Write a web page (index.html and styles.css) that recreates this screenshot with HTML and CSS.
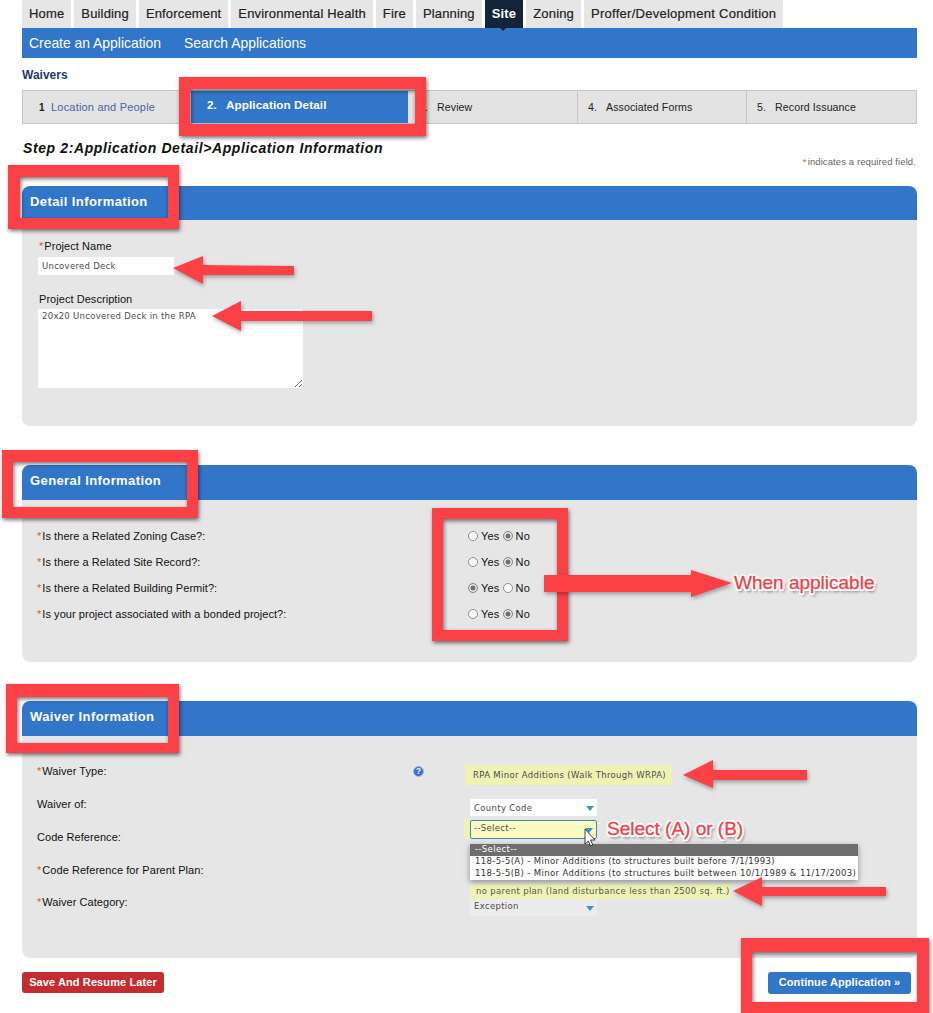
FILE: index.html
```html
<!DOCTYPE html>
<html lang="en">
<head>
<meta charset="utf-8">
<title>Waivers - Application Detail</title>
<link rel="stylesheet" href="styles.css">
</head>
<body>
<div class="page">
  <nav class="tabs">
    <a class="tab">Home</a><a class="tab">Building</a><a class="tab">Enforcement</a><a class="tab">Environmental Health</a><a class="tab">Fire</a><a class="tab">Planning</a><a class="tab tab-active">Site</a><a class="tab">Zoning</a><a class="tab">Proffer/Development Condition</a>
  </nav>
  <div class="subnav"><a>Create an Application</a><a>Search Applications</a></div>
  <div class="module">Waivers</div>
  <ol class="steps">
    <li class="step step-done"><span class="num num-first">1</span><span>Location and People</span></li>
    <li class="step step-current"><span class="num">2.</span><span>Application Detail</span></li>
    <li class="step step-third"><span class="num">3.</span><span>Review</span></li>
    <li class="step"><span class="num">4.</span><span>Associated Forms</span></li>
    <li class="step step-last"><span class="num">5.</span><span>Record Issuance</span></li>
  </ol>
  <h1 class="heading">Step 2:Application Detail&gt;Application Information</h1>
  <p class="required-note"><span class="star">*</span>indicates a required field.</p>

  <section class="panel panel-detail">
    <h2 class="panel-head">Detail Information</h2>
    <div class="panel-body detail-body">
      <label class="field-label"><span class="star">*</span>Project Name</label>
      <input class="text-input" type="text" value="Uncovered Deck">
      <label class="field-label label-desc">Project Description</label>
      <textarea class="text-area">20x20 Uncovered Deck in the RPA</textarea>
    </div>
  </section>

  <section class="panel panel-general">
    <h2 class="panel-head">General Information</h2>
    <div class="panel-body general-body">
      <div class="q-row"><span class="q"><span class="star">*</span>Is there a Related Zoning Case?:</span><span class="opts"><input class="radio" type="radio" name="a"><span>Yes</span><input class="radio" type="radio" name="a" checked><span>No</span></span></div>
      <div class="q-row"><span class="q"><span class="star">*</span>Is there a Related Site Record?:</span><span class="opts"><input class="radio" type="radio" name="b"><span>Yes</span><input class="radio" type="radio" name="b" checked><span>No</span></span></div>
      <div class="q-row"><span class="q"><span class="star">*</span>Is there a Related Building Permit?:</span><span class="opts"><input class="radio" type="radio" name="c" checked><span>Yes</span><input class="radio" type="radio" name="c"><span>No</span></span></div>
      <div class="q-row"><span class="q"><span class="star">*</span>Is your project associated with a bonded project?:</span><span class="opts"><input class="radio" type="radio" name="d"><span>Yes</span><input class="radio" type="radio" name="d" checked><span>No</span></span></div>
    </div>
  </section>

  <section class="panel panel-waiver">
    <h2 class="panel-head">Waiver Information</h2>
    <div class="panel-body waiver-body">
      <div class="w-labels">
        <div class="w-label w-label-help"><span><span class="star">*</span>Waiver Type:</span>
          <svg class="help" viewBox="0 0 12 12" width="11" height="11" aria-hidden="true"><circle cx="6" cy="6" r="5.4" fill="#3f6fc4" stroke="#9db6e2" stroke-width="1"/><text x="6" y="9" text-anchor="middle" class="help-q">?</text></svg>
        </div>
        <div class="w-label">Waiver of:</div>
        <div class="w-label">Code Reference:</div>
        <div class="w-label"><span class="star">*</span>Code Reference for Parent Plan:</div>
        <div class="w-label"><span class="star">*</span>Waiver Category:</div>
      </div>
      <div class="w-fields">
        <div class="hl hl-type">RPA Minor Additions (Walk Through WRPA)</div>
        <div class="sel sel-white">County Code<i class="caret"></i></div>
        <div class="sel-wrap">
          <div class="sel sel-focus">--Select--<i class="caret"></i></div>
          <ul class="menu">
            <li class="menu-on">--Select--</li>
            <li>118-5-5(A) - Minor Additions (to structures built before 7/1/1993)</li>
            <li>118-5-5(B) - Minor Additions (to structures built between 10/1/1989 &amp; 11/17/2003)</li>
          </ul>
        </div>
        <div class="hl hl-plan">no parent plan (land disturbance less than 2500 sq. ft.)</div>
        <div class="sel sel-grey">Exception<i class="caret"></i></div>
      </div>
    </div>
  </section>

  <div class="actions">
    <button class="btn btn-save" type="button">Save And Resume Later</button>
    <button class="btn btn-go" type="button">Continue Application »</button>
  </div>

  <!-- Red annotations drawn over the screenshot -->
  <div class="frame frame-step"></div>
  <div class="frame frame-detail"></div>
  <div class="frame frame-general"></div>
  <div class="frame frame-radios"></div>
  <div class="frame frame-waiver"></div>
  <div class="frame frame-continue"></div>
  <svg class="arrows" viewBox="0 0 933 1013" width="933" height="1013" aria-hidden="true">
    <polygon points="173,268 203,256 203,265 294,266 294,275 203,275 203,284"/>
    <polygon points="212,316 241,301 241,311 372,311 372,321 241,321 241,331"/>
    <polygon points="544,575 691,575 691,570 732,583 691,597 691,592 544,592"/>
    <polygon points="683,775 713,760 713,770 807,770 807,780 713,780 713,788"/>
    <polygon points="733,891 762,877 762,887 886,887 886,896 762,896 762,906"/>
    <path class="cursor" d="M585 829v15l3.400-3 2.200 5 2.200-1-2.200-5h4.500z"/>
  </svg>
  <span class="callout callout-when">When applicable</span>
  <span class="callout callout-select">Select (A) or (B)</span>
</div>
</body>
</html>
```
FILE: styles.css
```css
* { box-sizing: border-box; }
html, body { margin: 0; padding: 0; background: #fff; }
body { font-family: "Liberation Sans", Arial, sans-serif; color: #111; }
.page { position: relative; width: 933px; height: 1013px; overflow: hidden; padding: 0 16px 0 22px; }

.tabs { display: flex; height: 28px; gap: 3px; }
.tab { background: #e6e6e6; color: #222; font-size: 13px; line-height: 27px; padding: 0 7px; letter-spacing: .16px; -webkit-text-stroke: .2px #222; white-space: nowrap; }
.tab:last-child { letter-spacing: .27px; }
.tab-active { background: #12233a; color: #fff; font-weight: 700; -webkit-text-stroke: 0; position: relative; }
.tab-active::after { content: ""; position: absolute; left: 15px; top: 28px; border: 3px solid transparent; border-top-color: #12233a; }

.subnav { display: flex; gap: 23px; height: 30px; background: #3276c9; padding-left: 7px; color: #fff; font-size: 13.900px; line-height: 30px; }

.module { margin-top: 10px; height: 16px; line-height: 15px; font-size: 12px; font-weight: 700; color: #1f3b60; }

.steps { list-style: none; margin: 6px 0 0; padding: 0; display: flex; height: 34px; background: #e3e3e3; border: 1px solid #c6c6c6; font-size: 10.600px; letter-spacing: .1px; }
.step { display: flex; align-items: center; width: 169px; padding-left: 10px; color: #222; border-right: 1px solid #c6c6c6; }
.num { width: 18px; flex: none; }
.step-done { width: 168px; padding-left: 16px; color: #46659f; border-right: 0; font-size: 11px; letter-spacing: .2px; }
.num-first { width: 12px; color: #222; font-weight: 700; font-size: 10px; }
.step-current { width: 217px; padding: 0 0 5px 16px; background: #3276c9; color: #fff; font-weight: 700; font-size: 11.700px; border-right: 0; }
.step-current .num { width: 19px; }
.step-third { width: 170px; padding-left: 11px; }
.step-last { width: auto; flex: 1; border-right: 0; }

.heading { margin: 16px 0 0 1px; height: 18px; font-size: 14px; line-height: 17px; font-weight: 700; font-style: italic; color: #111; letter-spacing: .61px; }
.required-note { margin: -2px 1px 0 0; height: 12px; line-height: 12px; text-align: right; font-size: 9.500px; color: #666; letter-spacing: .1px; }
.star { color: #c8642a; margin-right: 1px; }

.panel-head { margin: 0; height: 34px; background: #3276c9; border-radius: 8px 8px 0 0; padding-left: 8px; color: #fff; font-size: 13px; line-height: 32px; font-weight: 700; letter-spacing: .4px; }
.panel-body { background: #e6e6e6; border-radius: 0 0 8px 8px; font-size: 11px; letter-spacing: .05px; color: #111; }
.panel-detail { margin-top: 18px; }
.panel-general { margin-top: 39px; }
.panel-waiver { margin-top: 39px; }
.panel-general .panel-head, .panel-waiver .panel-head { height: 35px; }

.detail-body { height: 206px; padding: 20px 0 0 16px; }
.field-label { display: block; height: 13px; line-height: 13px; margin-left: 1px; }
.label-desc { margin-top: 18px; }
.text-input, .text-area { display: block; border: 0; background: #fff; padding: 0 4px; margin: 0; color: #4c4c4c; font-family: "DejaVu Sans", sans-serif; font-size: 8.500px; letter-spacing: .28px; outline: 0; border-radius: 1px; }
.text-input { width: 136px; height: 18px; margin-top: 4px; }
.text-area { width: 265px; height: 79px; margin-top: 3px; padding-top: 2px; }

.general-body { height: 162px; padding: 23px 0 0 15px; }
.q-row { display: grid; grid-template-columns: 431px auto; height: 26px; line-height: 26px; align-items: center; }
.q { white-space: nowrap; }
.opts { display: flex; align-items: center; gap: 3px; letter-spacing: .2px; }
.radio { appearance: none; -webkit-appearance: none; width: 10px; height: 10px; margin: 0; border: 1px solid #8c8c8c; border-radius: 50%; background: #fff; }
.radio:checked { background: #707070; box-shadow: inset 0 0 0 1.500px #eee; }

.waiver-body { height: 222px; padding: 28px 0 0 15px; display: grid; grid-template-columns: 428px 1fr; }
.w-labels { display: flex; flex-direction: column; }
.w-label { height: 33px; line-height: 14px; white-space: nowrap; }
.w-label-help { display: flex; justify-content: space-between; padding-right: 41px; }
.w-label:nth-child(5) { margin-top: -1px; }
.help { margin-top: 2px; }
.help-q { font-size: 9px; font-weight: 700; fill: #fff; letter-spacing: 0; }

.w-fields { font-family: "DejaVu Sans", sans-serif; font-size: 8.500px; letter-spacing: .33px; color: #4c4c4c; }
.hl { background: #eef3b4; white-space: nowrap; }
.hl-type { width: 207px; height: 20px; line-height: 21px; margin: 1px 0 0 0; padding-left: 8px; }
.hl-plan { width: 260px; height: 15px; line-height: 15px; margin: 21px 0 0 5px; padding-left: 6px; color: #555; }
.sel { position: relative; width: 127px; height: 17px; margin-left: 5px; padding-left: 4px; line-height: 19px; }
.sel-white { background: #fff; margin-top: 14px; }
.sel-wrap { position: relative; margin-top: 4px; height: 43px; }
.sel-focus { height: 19px; line-height: 15px; background: #fafac2; border: 1px solid #3f8aa5; border-radius: 2px; padding-left: 3px; box-shadow: -6px 0 0 #eef3b4; }
.sel-grey { background: #ececec; line-height: 15px; }
.caret { position: absolute; right: 3px; top: 7px; border: 4px solid transparent; border-top: 5px solid #3d94cc; border-bottom: 0; }
.menu { position: absolute; left: 5px; top: 24px; width: 388px; margin: 0; padding: 0; list-style: none; background: #fff; box-shadow: 0 2px 6px rgba(0,0,0,.4); z-index: 2; line-height: 11px; color: #333; white-space: nowrap; letter-spacing: .36px; }
.menu li { padding-left: 5px; height: 12px; }
.menu .menu-on { background: #6e6e6e; color: #fff; }

.actions { display: flex; justify-content: space-between; padding-right: 6px; margin-top: 14px; }
.btn { border: 0; height: 21px; padding: 0 0 2px; border-radius: 3px; color: #fff; font-family: "Liberation Sans", Arial, sans-serif; font-size: 11px; font-weight: 700; letter-spacing: .1px; }
.btn-save { width: 142px; background: #c42d2f; }
.btn-go { width: 143px; height: 22px; background: #3276c9; }

.frame { position: absolute; border: 12px solid #fb4046; box-shadow: 1px 2px 4px rgba(0,0,0,.55), inset 1px 2px 4px rgba(0,0,0,.55); z-index: 3; }
.frame-step { left: 179px; top: 77px; width: 247px; height: 59px; border-width: 12px 11px; }
.frame-detail { left: 8px; top: 165px; width: 171px; height: 64px; border-width: 12px 11px 11px 12px; }
.frame-general { left: 2px; top: 450px; width: 196px; height: 68px; border-width: 12px 11px 11px 11px; }
.frame-radios { left: 432px; top: 508px; width: 136px; height: 133px; border-width: 11px; }
.frame-waiver { left: 6px; top: 684px; width: 173px; height: 69px; border-width: 13px 11px 10px 11px; }
.frame-continue { left: 741px; top: 938px; width: 188px; height: 75px; border-width: 14px 12px 11px 11px; }

.arrows { position: absolute; left: 0; top: 0; z-index: 4; fill: #fb4046; }
.arrows polygon { filter: drop-shadow(1px 2px 2px rgba(0,0,0,.35)); }
.arrows .cursor { fill: #fff; stroke: #111; stroke-width: .8; }

.callout { position: absolute; z-index: 5; color: #f0404a; font-size: 19px; line-height: 22px; -webkit-text-stroke: .3px #f0404a; white-space: nowrap; text-shadow: -2px 0 0 #fff, 2px 0 0 #fff, 0 -2px 0 #fff, 0 2px 0 #fff, -1.500px -1.500px 0 #fff, 1.500px -1.500px 0 #fff, -1.500px 1.500px 0 #fff, 1.500px 1.500px 0 #fff, 2px 3px 3px rgba(0,0,0,.6); }
.callout-when { left: 734px; top: 572px; }
.callout-select { left: 607px; top: 818px; }
```
